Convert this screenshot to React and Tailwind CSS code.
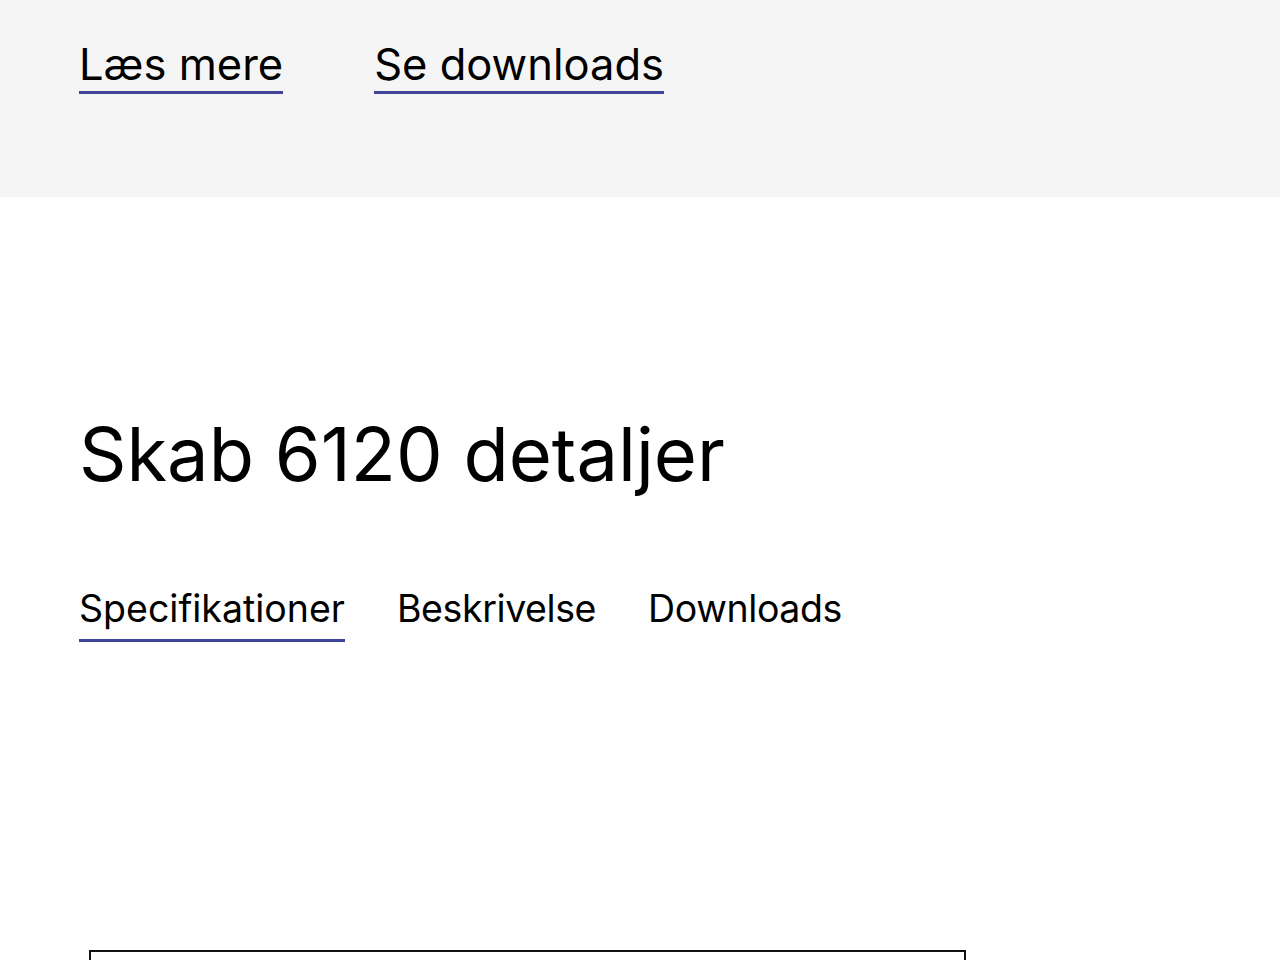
import React from "react";

export default function App() {
  return (
    <div className="min-h-[960px] bg-white text-black font-['Inter',sans-serif]">
      <div className="h-[197px] bg-[#f5f5f5] px-[79px] pt-[40px]">
        <div className="flex gap-[91px]">
          <a className="text-[43.5px] leading-[48px] border-b-[3px] border-[#3f4499] pb-[3px]">Læs mere</a>
          <a className="text-[43.5px] leading-[48px] border-b-[3px] border-[#3f4499] pb-[3px]">Se downloads</a>
        </div>
      </div>
      <div className="px-[79px] pt-[212px]">
        <h1 className="text-[74px] leading-[90px] font-normal">Skab 6120 detaljer</h1>
        <div className="mt-[88px] flex items-start gap-[52px]">
          <button className="text-[37.5px] leading-[44px] border-b-[3px] border-[#3f4499] pb-[8px]">Specifikationer</button>
          <button className="text-[37.5px] leading-[44px] tracking-[-0.4px] border-b-[3px] border-transparent pb-[8px]">Beskrivelse</button>
          <button className="text-[37.5px] leading-[44px] tracking-[-0.4px] border-b-[3px] border-transparent pb-[8px]">Downloads</button>
        </div>
        <div className="mt-[308px] ml-[10px] w-[877px] h-[40px] border-2 border-[#111]"></div>
      </div>
    </div>
  );
}
